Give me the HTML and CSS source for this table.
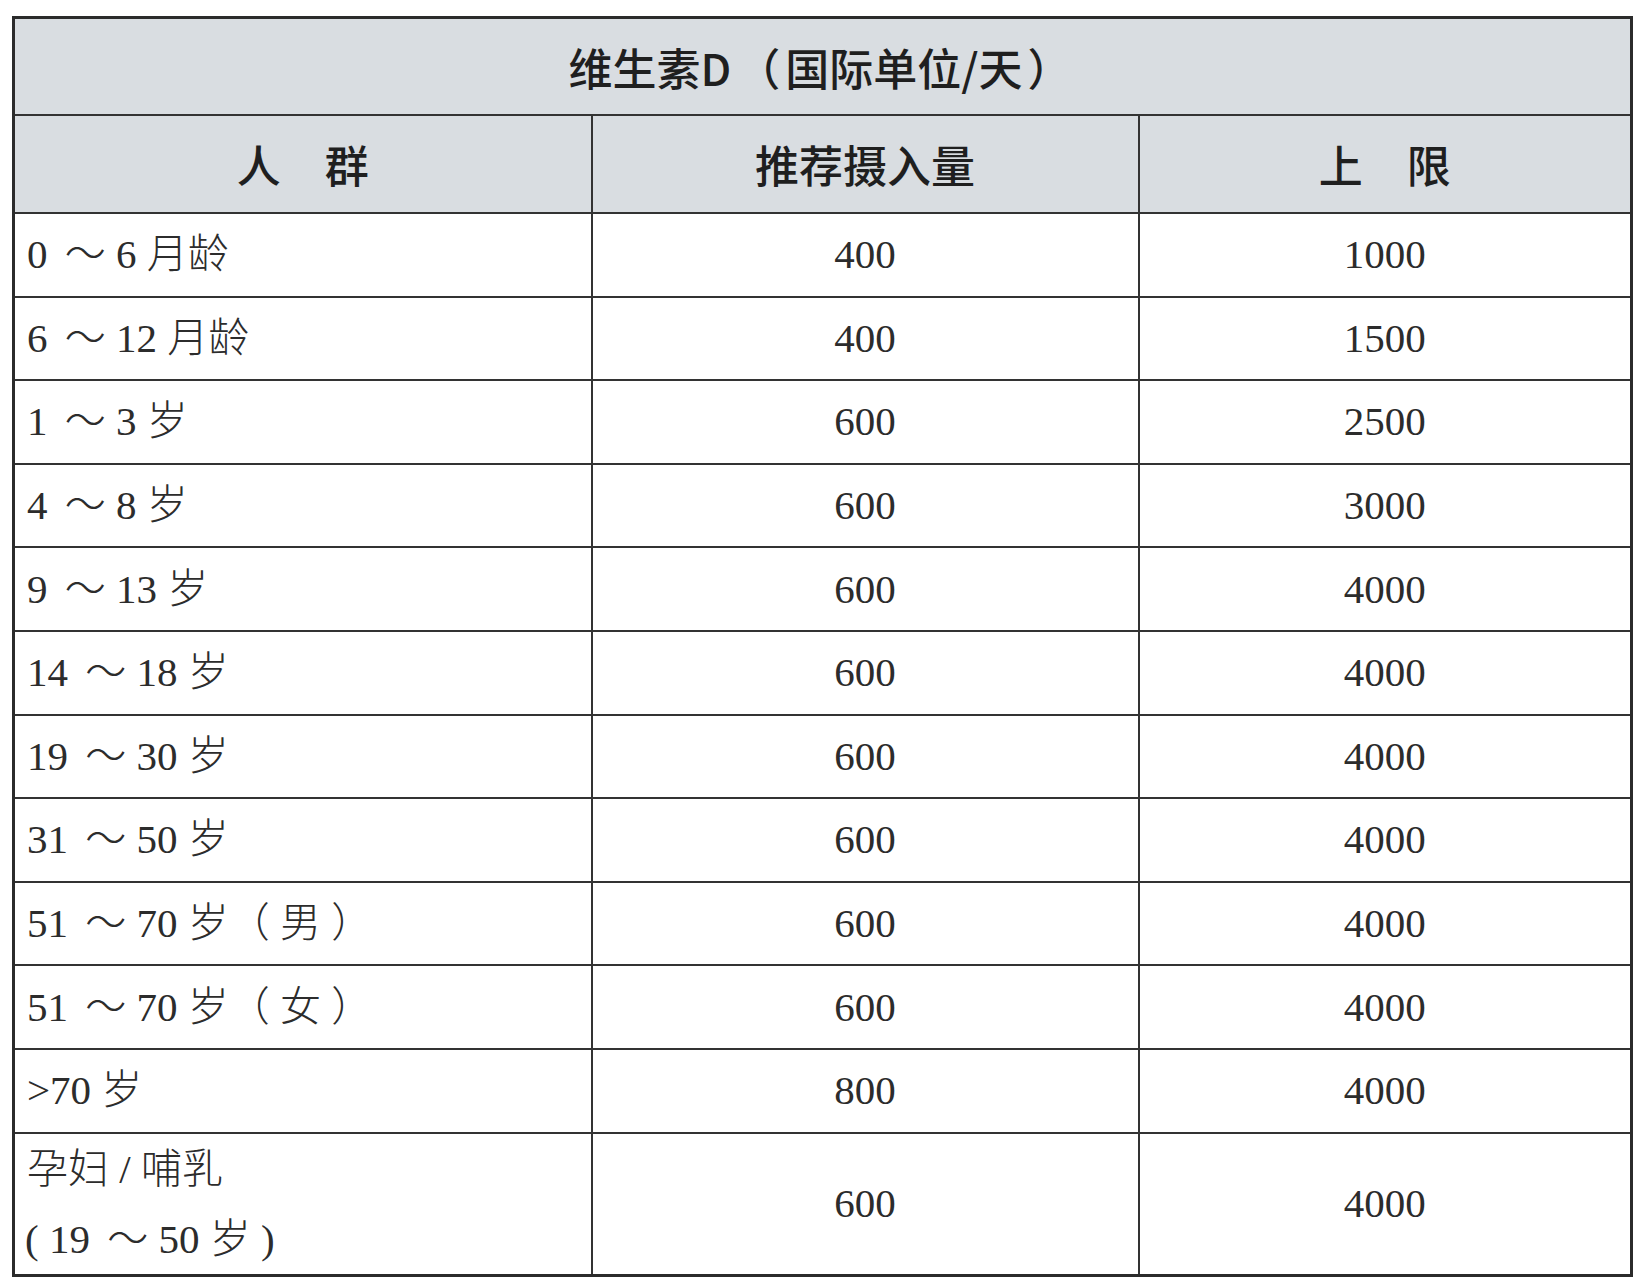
FILE: index.html
```html
<!DOCTYPE html>
<html lang="zh-CN">
<head>
<meta charset="utf-8">
<title>维生素D</title>
<link rel="stylesheet" href="styles.css">
</head>
<body>
<table class="vd-table">
  <colgroup>
    <col class="c1">
    <col class="c2">
    <col class="c3">
  </colgroup>
  <thead>
    <tr class="title-row"><th colspan="3">维生素D<span class="pp">（</span>国际单位/天<span class="pp">）</span></th></tr>
    <tr class="head-row"><th>人　群</th><th>推荐摄入量</th><th>上　限</th></tr>
  </thead>
  <tbody>
    <tr><td class="grp">0 <span class="t">～</span> 6 月龄</td><td>400</td><td>1000</td></tr>
    <tr><td class="grp">6 <span class="t">～</span> 12 月龄</td><td>400</td><td>1500</td></tr>
    <tr><td class="grp">1 <span class="t">～</span> 3 岁</td><td>600</td><td>2500</td></tr>
    <tr><td class="grp">4 <span class="t">～</span> 8 岁</td><td>600</td><td>3000</td></tr>
    <tr><td class="grp">9 <span class="t">～</span> 13 岁</td><td>600</td><td>4000</td></tr>
    <tr><td class="grp">14 <span class="t">～</span> 18 岁</td><td>600</td><td>4000</td></tr>
    <tr><td class="grp">19 <span class="t">～</span> 30 岁</td><td>600</td><td>4000</td></tr>
    <tr><td class="grp">31 <span class="t">～</span> 50 岁</td><td>600</td><td>4000</td></tr>
    <tr><td class="grp">51 <span class="t">～</span> 70 岁（ 男 ）</td><td>600</td><td>4000</td></tr>
    <tr><td class="grp">51 <span class="t">～</span> 70 岁（ 女 ）</td><td>600</td><td>4000</td></tr>
    <tr><td class="grp">&gt;70 岁</td><td>800</td><td>4000</td></tr>
    <tr class="last-row"><td class="grp two-line"><span class="ln">孕妇 / 哺乳</span><span class="ln ln2">( 19 <span class="t">～</span> 50 岁 )</span></td><td>600</td><td>4000</td></tr>
  </tbody>
</table>
</body>
</html>
```

FILE: styles.css
```css
html, body {
  margin: 0;
  padding: 0;
  background: #ffffff;
}

body {
  padding: 16px 0 0 12px;
}

.vd-table {
  border-collapse: collapse;
  table-layout: fixed;
  width: 1618px;
  border: 3px solid #2b2b2b;
  color: #262626;
}

.c1 { width: 578px; }
.c2 { width: 547px; }
.c3 { width: 493px; }

.vd-table th,
.vd-table td {
  border: 2px solid #333333;
  padding: 0;
  text-align: center;
  vertical-align: middle;
}

.vd-table th {
  background: #d9dde1;
  font-family: "Noto Sans CJK SC", "Noto Sans", sans-serif;
  font-weight: 500;
  font-size: 44px;
  color: #1f1f1f;
  line-height: 1;
}

.title-row th {
  height: 95px;
}

.head-row th {
  height: 96px;
}

.pp {
  margin: 0 5px;
}

.vd-table td {
  height: 81.6px;
  font-family: "Liberation Serif", "Noto Sans CJK SC", serif;
  font-size: 41px;
  line-height: 1;
  font-weight: 400;
  color: #2c2c2c;
}

.vd-table td.grp {
  text-align: left;
  padding-left: 12px;
  font-weight: 300;
}

.t {
  margin-left: 7px;
}

.last-row td {
  height: 139px;
}

.two-line .ln {
  display: block;
  line-height: 70px;
}

.two-line .ln2 {
  margin-left: -2px;
}
```
